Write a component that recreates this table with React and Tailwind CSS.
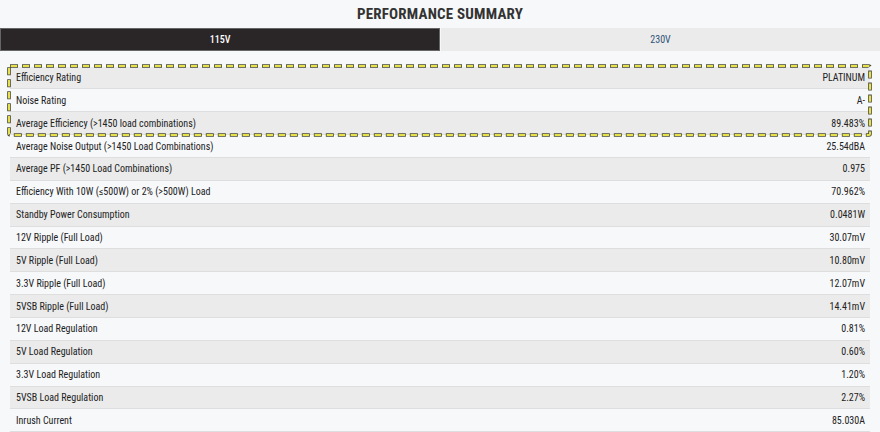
import React from 'react';

const ROWS = [
  ['Efficiency Rating', 'PLATINUM'],
  ['Noise Rating', 'A-'],
  ['Average Efficiency (>1450 load combinations)', '89.483%'],
  ['Average Noise Output (>1450 Load Combinations)', '25.54dBA'],
  ['Average PF (>1450 Load Combinations)', '0.975'],
  ['Efficiency With 10W (\u2264500W) or 2% (>500W) Load', '70.962%'],
  ['Standby Power Consumption', '0.0481W'],
  ['12V Ripple (Full Load)', '30.07mV'],
  ['5V Ripple (Full Load)', '10.80mV'],
  ['3.3V Ripple (Full Load)', '12.07mV'],
  ['5VSB Ripple (Full Load)', '14.41mV'],
  ['12V Load Regulation', '0.81%'],
  ['5V Load Regulation', '0.60%'],
  ['3.3V Load Regulation', '1.20%'],
  ['5VSB Load Regulation', '2.27%'],
  ['Inrush Current', '85.030A'],
];

function Row({ label, value, index }) {
  const shaded = index % 2 === 0;
  return (
    <div
      className={`h-[22.87px] flex items-center justify-between pl-[6px] pr-[5px] border-b border-[#dedede] ${
        shaded ? 'bg-[#ebebeb]' : 'bg-[#f7f8fa]'
      }`}
    >
      <span>{label}</span>
      <span>{value}</span>
    </div>
  );
}

function Highlight() {
  // dashed marker round the first three rows
  return (
    <svg className="absolute -left-[3px] -top-[3px] w-[865px] h-[73px] pointer-events-none" viewBox="0 0 865 73">
      <rect x="2" y="2" width="861" height="69" rx="1" fill="none" stroke="#4a4a3a" strokeWidth="3.6" strokeDasharray="8 4" />
      <rect x="2" y="2" width="861" height="69" rx="1" fill="none" stroke="#e6e04a" strokeWidth="2" strokeDasharray="6.4 5.6" strokeDashoffset="-0.8" />
    </svg>
  );
}

export default function App() {
  return (
    <div className="w-[880px] h-[432px] overflow-hidden bg-[#f7f8fa] text-[#222] font-['Roboto_Condensed',Roboto,sans-serif]">
      <h2 className="h-[28px] flex items-center justify-center text-[15px] font-bold text-[#333] tracking-[0.2px]">
        PERFORMANCE SUMMARY
      </h2>

      <div className="flex h-[23px] text-[10px]">
        <div className="w-[440px] flex items-center justify-center bg-[#2a2627] border border-[#666] text-white font-medium">
          115V
        </div>
        <div className="flex-1 ml-[1px] flex items-center justify-center bg-[#ebebeb] text-[#2f5378]">
          230V
        </div>
      </div>

      <div className="mt-[15.5px] mx-[10px] text-[10px]">
        <div className="relative">
          {ROWS.slice(0, 3).map((r, i) => (
            <Row key={r[0]} label={r[0]} value={r[1]} index={i} />
          ))}
          <Highlight />
        </div>
        {ROWS.slice(3).map((r, i) => (
          <Row key={r[0]} label={r[0]} value={r[1]} index={i + 3} />
        ))}
      </div>
    </div>
  );
}
